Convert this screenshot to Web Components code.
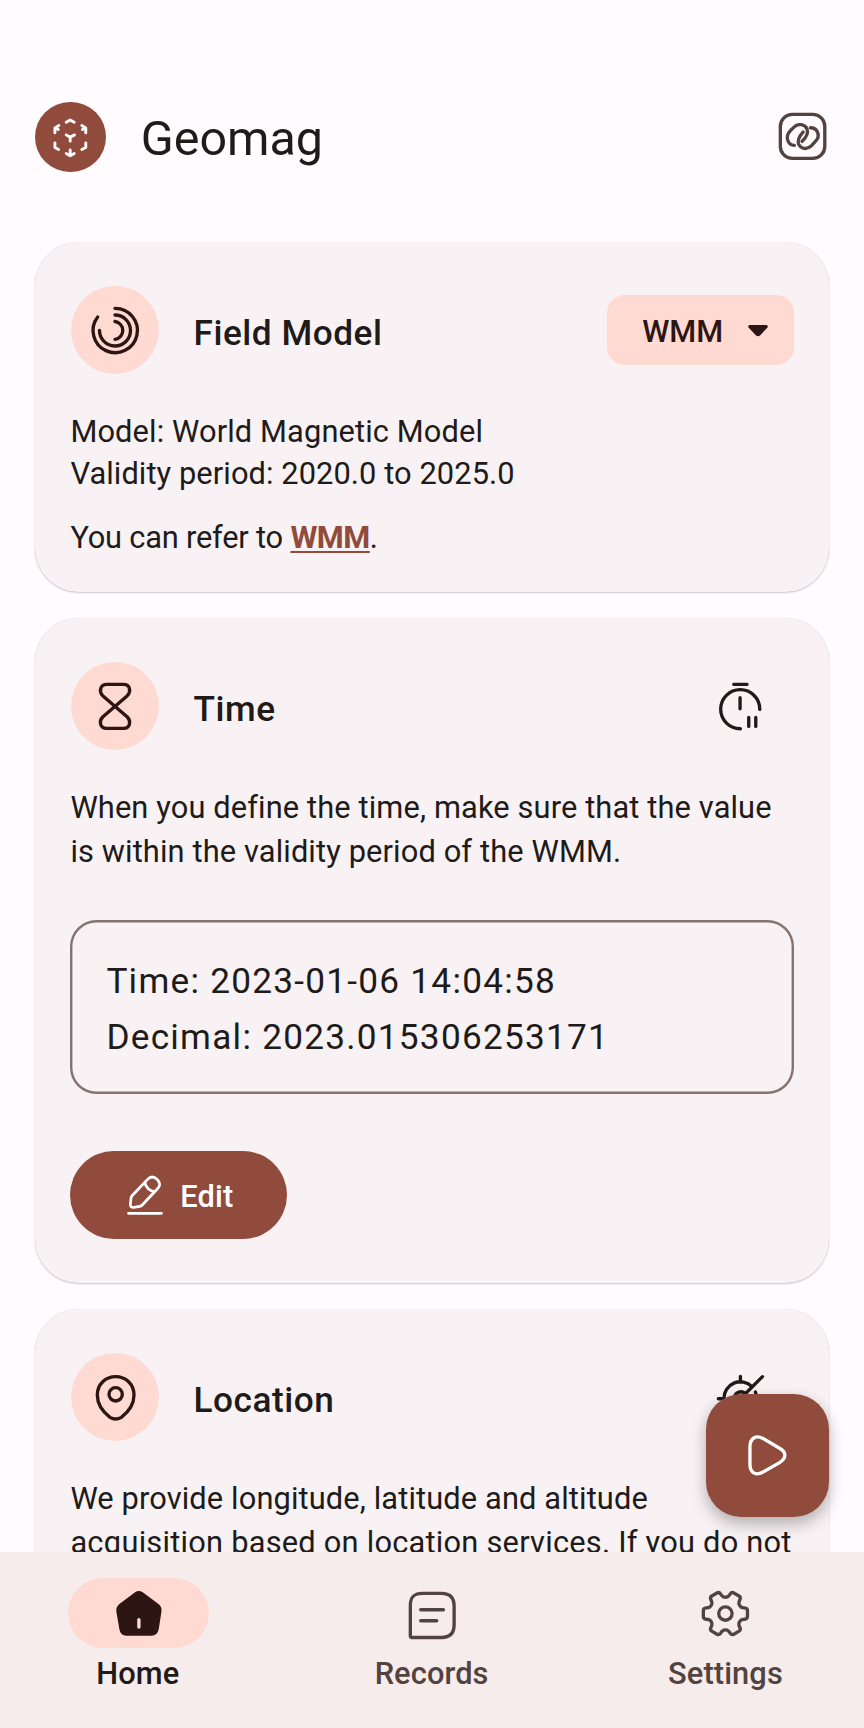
<!DOCTYPE html>
<html lang="en">
<head>
<meta charset="utf-8">
<title>Geomag</title>
<style>
html,body{margin:0;height:100%}
body{font-family:Roboto,"Liberation Sans",sans-serif;color:#201a19;background:#fffbff;overflow:hidden}
a{color:#904b3c;font-weight:700;text-decoration:underline;text-decoration-thickness:1.6px;text-underline-offset:2.5px;letter-spacing:-.5px}
p{margin:0}
</style>
</head>
<body>
<geo-app>
  <geo-topbar slot="top">Geomag</geo-topbar>
  <geo-card icon="model" heading="Field Model" style="--lh:42px;--gap:37px">
    <geo-select slot="action">WMM</geo-select>
    <p>Model: World Magnetic Model<br><span style="letter-spacing:.09px">Validity period: 2020.0 to 2025.0</span></p>
    <p style="margin:21.6px 0 -10.6px;letter-spacing:-.2px">You can refer to <a>WMM</a>.</p>
  </geo-card>
  <geo-card icon="time" heading="Time">
    <geo-icon slot="action" name="timer"></geo-icon>
    <p>When you define the time, make sure that the value is within the validity period of the WMM.</p>
    <geo-readout><div>Time: 2023-01-06 14:04:58</div><div>Decimal: 2023.015306253171</div></geo-readout>
    <geo-button>Edit</geo-button>
  </geo-card>
  <geo-card icon="pin" heading="Location">
    <geo-icon slot="action" name="gps"></geo-icon>
    <p>We provide longitude, latitude and altitude <span style="letter-spacing:.23px">acquisition based on location services. If you do not</span></p>
  </geo-card>
  <geo-fab slot="fab"></geo-fab>
  <geo-nav slot="nav">
    <geo-nav-item icon="home" active>Home</geo-nav-item>
    <geo-nav-item icon="records">Records</geo-nav-item>
    <geo-nav-item icon="settings">Settings</geo-nav-item>
  </geo-nav>
</geo-app>
<script>
// Six-toothed gear outline around (cx, cy)
function gear(cx, cy) {
  let d = '';
  for (let k = 0; k < 6; k++) {
    const a = k * Math.PI / 3, c = Math.cos(a), s = Math.sin(a);
    const p = (x, y) => (cx + x * c - y * s).toFixed(1) + ' ' + (cy + x * s + y * c).toFixed(1);
    d += (k ? 'L' : 'M') + p(46, -20) + 'Q' + p(50, -17) + ' ' + p(57, -17) + 'Q' + p(66, -16) + ' ' + p(66, -9) +
      'L' + p(66, 9) + 'Q' + p(66, 16) + ' ' + p(57, 17) + 'Q' + p(50, 17) + ' ' + p(46, 20) + 'Q' + p(41.6, 24) + ' ' + p(40.4, 29.8);
  }
  return d + 'Z';
}
const ICONS = {
  logo: ['106 64 212 212', '<g stroke-width="8.6"><path d="M200 125L212 118L224 125M212 182V170L200 163M212 170L225 163M212 208V226M200 219L212 226L224 219M166 157V142L178 135M166 142L176 147M259 157V142L247 135M259 142L249 147M166 187V201L177 207M259 187V201L247 207"/></g>'],
  link: ['228 91 158 158', '<rect x="241" y="104" width="133" height="132" rx="36"/><path d="M283 197C262 196 255 170 270 154L281 143C294 129 315 134 321 148C326 161 320 171 306 185M331 144C353 144 362 169 346 185L333 199C320 211 302 207 296 194C291 181 296 171 309 157"/>'],
  model: ['121 168 264 264', '<path d="M253 235A66.5 66.5 0 1 1 201 261M253 255A46.5 46.5 0 1 1 206.500 301M253 274.500A27 27 0 0 1 253 328"/>'],
  time: ['121 66 264 264', '<path d="M228 133H279C297 133 303 153 290 167L216 231C203 245 209 265 228 265H279C297 265 303 245 290 231L216 167C203 153 210 133 228 133Z"/>'],
  timer: ['164 120 158 158', '<path d="M223 133H263M301 208A58.500 58.500 0 1 0 243 266M242 173V206M268 232V259M289 232V259"/>'],
  pin: ['121 160 264 264', '<path d="M255 231C285 231 310 253 310 286C310 317 289 340 272 353Q255 363 238 353C221 340 200 317 200 286C200 253 225 231 255 231Z"/><circle cx="255" cy="284" r="20"/>'],
  gps: ['163 213 158 158', '<path d="M193 296A49 49 0 0 1 277 260M242 229V246M176 296H192M308 230L215 323M287 276Q290 283 291 296M224 296A20 20 0 0 1 258 281"/>'],
  play: ['137 281 370 370', '<path d="M269 440V492C269 518 287 527 307 516L358 487C379 474 379 456 358 444L307 414C287 403 269 414 269 440Z"/>'],
  edit: ['0 0 24 24', '<g stroke-width="1.5"><path d="M13.260 3.600L5.050 12.290c-.31.33-.61.98-.67 1.430l-.37 3.240c-.13 1.170.71 1.970 1.870 1.770l3.220-.55c.45-.08 1.080-.41 1.390-.75l8.210-8.690c1.420-1.500 2.060-3.210-.15-5.300-2.200-2.070-3.870-1.340-5.290.16zM11.890 5.050a6.126 6.126 0 0 0 5.450 5.150M3 22h18"/></g>'],
  home: ['335 141 158 158', '<path fill="currentColor" stroke="none" d="M404 157Q415 149 427 157L474 192Q485 201 483 214L475 267Q471 287 453 287H378Q360 287 357 267L348 214Q346 202 357 192Z"/><path stroke="#ffdad2" d="M415.500 239V261"/>'],
  records: ['138 141 158 158', '<path d="M151 196C151 170 162 160 188 160H244C270 160 282 172 282 198V254C282 280 270 292 244 292H156Q151 292 151 287ZM182 209H250M182 242H230"/>'],
  settings: ['1018 141 158 158', '<path d="' + gear(1097, 220.500) + '"/><circle cx="1097" cy="220.500" r="20"/>']
};
function define(name, html, setup) {
  const t = document.createElement('template');
  t.innerHTML = html;
  customElements.define(name, class extends HTMLElement {
    constructor() { super(); this.attachShadow({ mode: 'open' }).append(t.content.cloneNode(true)); }
    connectedCallback() { if (setup) setup(this, this.shadowRoot); }
  });
}
function makeIcon(name) {
  const i = document.createElement('geo-icon');
  i.setAttribute('name', name);
  return i;
}
define('geo-icon', `<style>:host{display:block;width:52.8px;height:52.8px;flex:none}svg{display:block;width:100%;height:100%;fill:none;stroke:currentColor;stroke-width:10;stroke-linecap:round;stroke-linejoin:round}</style><svg></svg>`, (h, r) => {
  const [box, body] = ICONS[h.getAttribute('name')], s = r.querySelector('svg');
  s.setAttribute('viewBox', box);
  s.innerHTML = body;
});
define('geo-app', `<style>
:host{display:flex;flex-direction:column;height:1728px;width:864px;position:relative;overflow:hidden}
main{flex:1;min-height:0;overflow:hidden;display:flex;flex-direction:column;gap:26.2px;padding:0 35.2px}
</style><slot name="top"></slot><main><slot></slot></main><slot name="fab"></slot><slot name="nav"></slot>`);
define('geo-topbar', `<style>
:host{display:flex;align-items:center;height:70.4px;padding:101.6px 35.2px 70px;font-size:48.4px;flex:none}
.logo{width:70.4px;height:70.4px;border-radius:50%;background:#904b3c;color:#fff}
.logo geo-icon{width:100%;height:100%}
h1{font:inherit;margin:0;padding:4px 0 0 35.2px;flex:1}
.link{color:#534340}
</style><div class="logo"><geo-icon name="logo"></geo-icon></div><h1><slot></slot></h1><geo-icon class="link" name="link"></geo-icon>`);
define('geo-card', `<style>
:host{display:block;flex:none;background:#f8f2f4;border-radius:44px;padding:44px 35.2px;box-shadow:0 1px 2px rgba(0,0,0,.2),0 0 1px rgba(0,0,0,.14)}
header{display:flex;align-items:center;height:88px;margin-bottom:var(--gap,36px)}
.badge{width:88px;height:88px;border-radius:50%;background:#ffdad2;color:#2c1512;margin:0 -.3px 0 .3px}
.badge geo-icon{width:88px;height:88px}
h2{flex:1;margin:0;padding:6px 0 0 35.2px;font-size:35.2px;font-weight:500;letter-spacing:.52px}
.body{font-size:30.8px;line-height:var(--lh,44px);letter-spacing:.125px}
::slotted(geo-icon){margin-right:26.4px}
</style><header><div class="badge"></div><h2></h2><slot name="action"></slot></header><div class="body"><slot></slot></div>`, (h, r) => {
  r.querySelector('.badge').replaceChildren(makeIcon(h.getAttribute('icon')));
  r.querySelector('h2').textContent = h.getAttribute('heading');
});
define('geo-select', `<style>
:host{display:flex;align-items:center;justify-content:space-between;box-sizing:border-box;width:186.6px;height:70.4px;border-radius:17.6px;background:#ffdad2;color:#2c1512;font-size:30.8px;font-weight:500;padding:0 25.5px 0 35.2px}
span{padding-top:3px}svg{width:20px;height:12px;margin-top:2px}
</style><span><slot></slot></span><svg viewBox="0 0 20 12"><path fill="currentColor" d="M1.500 0H18.500Q21 1 19 3L12 10.500Q10 12 8 10.500L1 3Q-1 1 1.500 0Z"/></svg>`);
define('geo-readout', `<style>
:host{display:block;box-sizing:border-box;height:173.6px;margin:45.8px 0 57.3px;padding:32.9px 36px;box-shadow:inset 0 0 0 2.4px #85736f;border-radius:26.4px;font-size:35.2px;line-height:56px;letter-spacing:1.25px}
</style><slot></slot>`);
define('geo-button', `<style>
:host{display:flex;align-items:center;box-sizing:border-box;width:216.6px;height:88px;padding-left:52.8px;gap:13px;border-radius:44px;background:#904b3c;color:#fff;font-size:30.8px;font-weight:500;letter-spacing:.2px}
geo-icon{width:44px;height:44px}span{padding-top:4px}
</style><geo-icon name="edit"></geo-icon><span><slot></slot></span>`);
define('geo-fab', `<style>
:host{position:absolute;right:35.2px;bottom:211px;width:123.2px;height:123.2px;border-radius:35.2px;background:#904b3c;color:#fff;box-shadow:0 8px 16px rgba(0,0,0,.24),0 1px 14px rgba(0,0,0,.06)}
geo-icon{width:100%;height:100%}
</style><geo-icon name="play"></geo-icon>`);
define('geo-nav', `<style>:host{display:grid;grid-template-columns:repeat(3,1fr);gap:17.6px;height:176px;flex:none;background:#f6ecec;position:relative}</style><slot></slot>`);
define('geo-nav-item', `<style>
:host{display:flex;flex-direction:column;align-items:center;padding-top:26px;color:#534340;font-size:30.8px;font-weight:500;letter-spacing:.1px}
.pill{display:flex;align-items:center;justify-content:center;width:140.8px;height:70.4px;border-radius:35.2px}
:host([active]){color:#201a19}
:host([active]) .pill{background:#ffdad2;color:#2c1512}
span{line-height:44px;margin:4px .8px 0 0}
</style><div class="pill"></div><span><slot></slot></span>`, (h, r) => {
  r.querySelector('.pill').replaceChildren(makeIcon(h.getAttribute('icon')));
});
</script>
</body>
</html>
